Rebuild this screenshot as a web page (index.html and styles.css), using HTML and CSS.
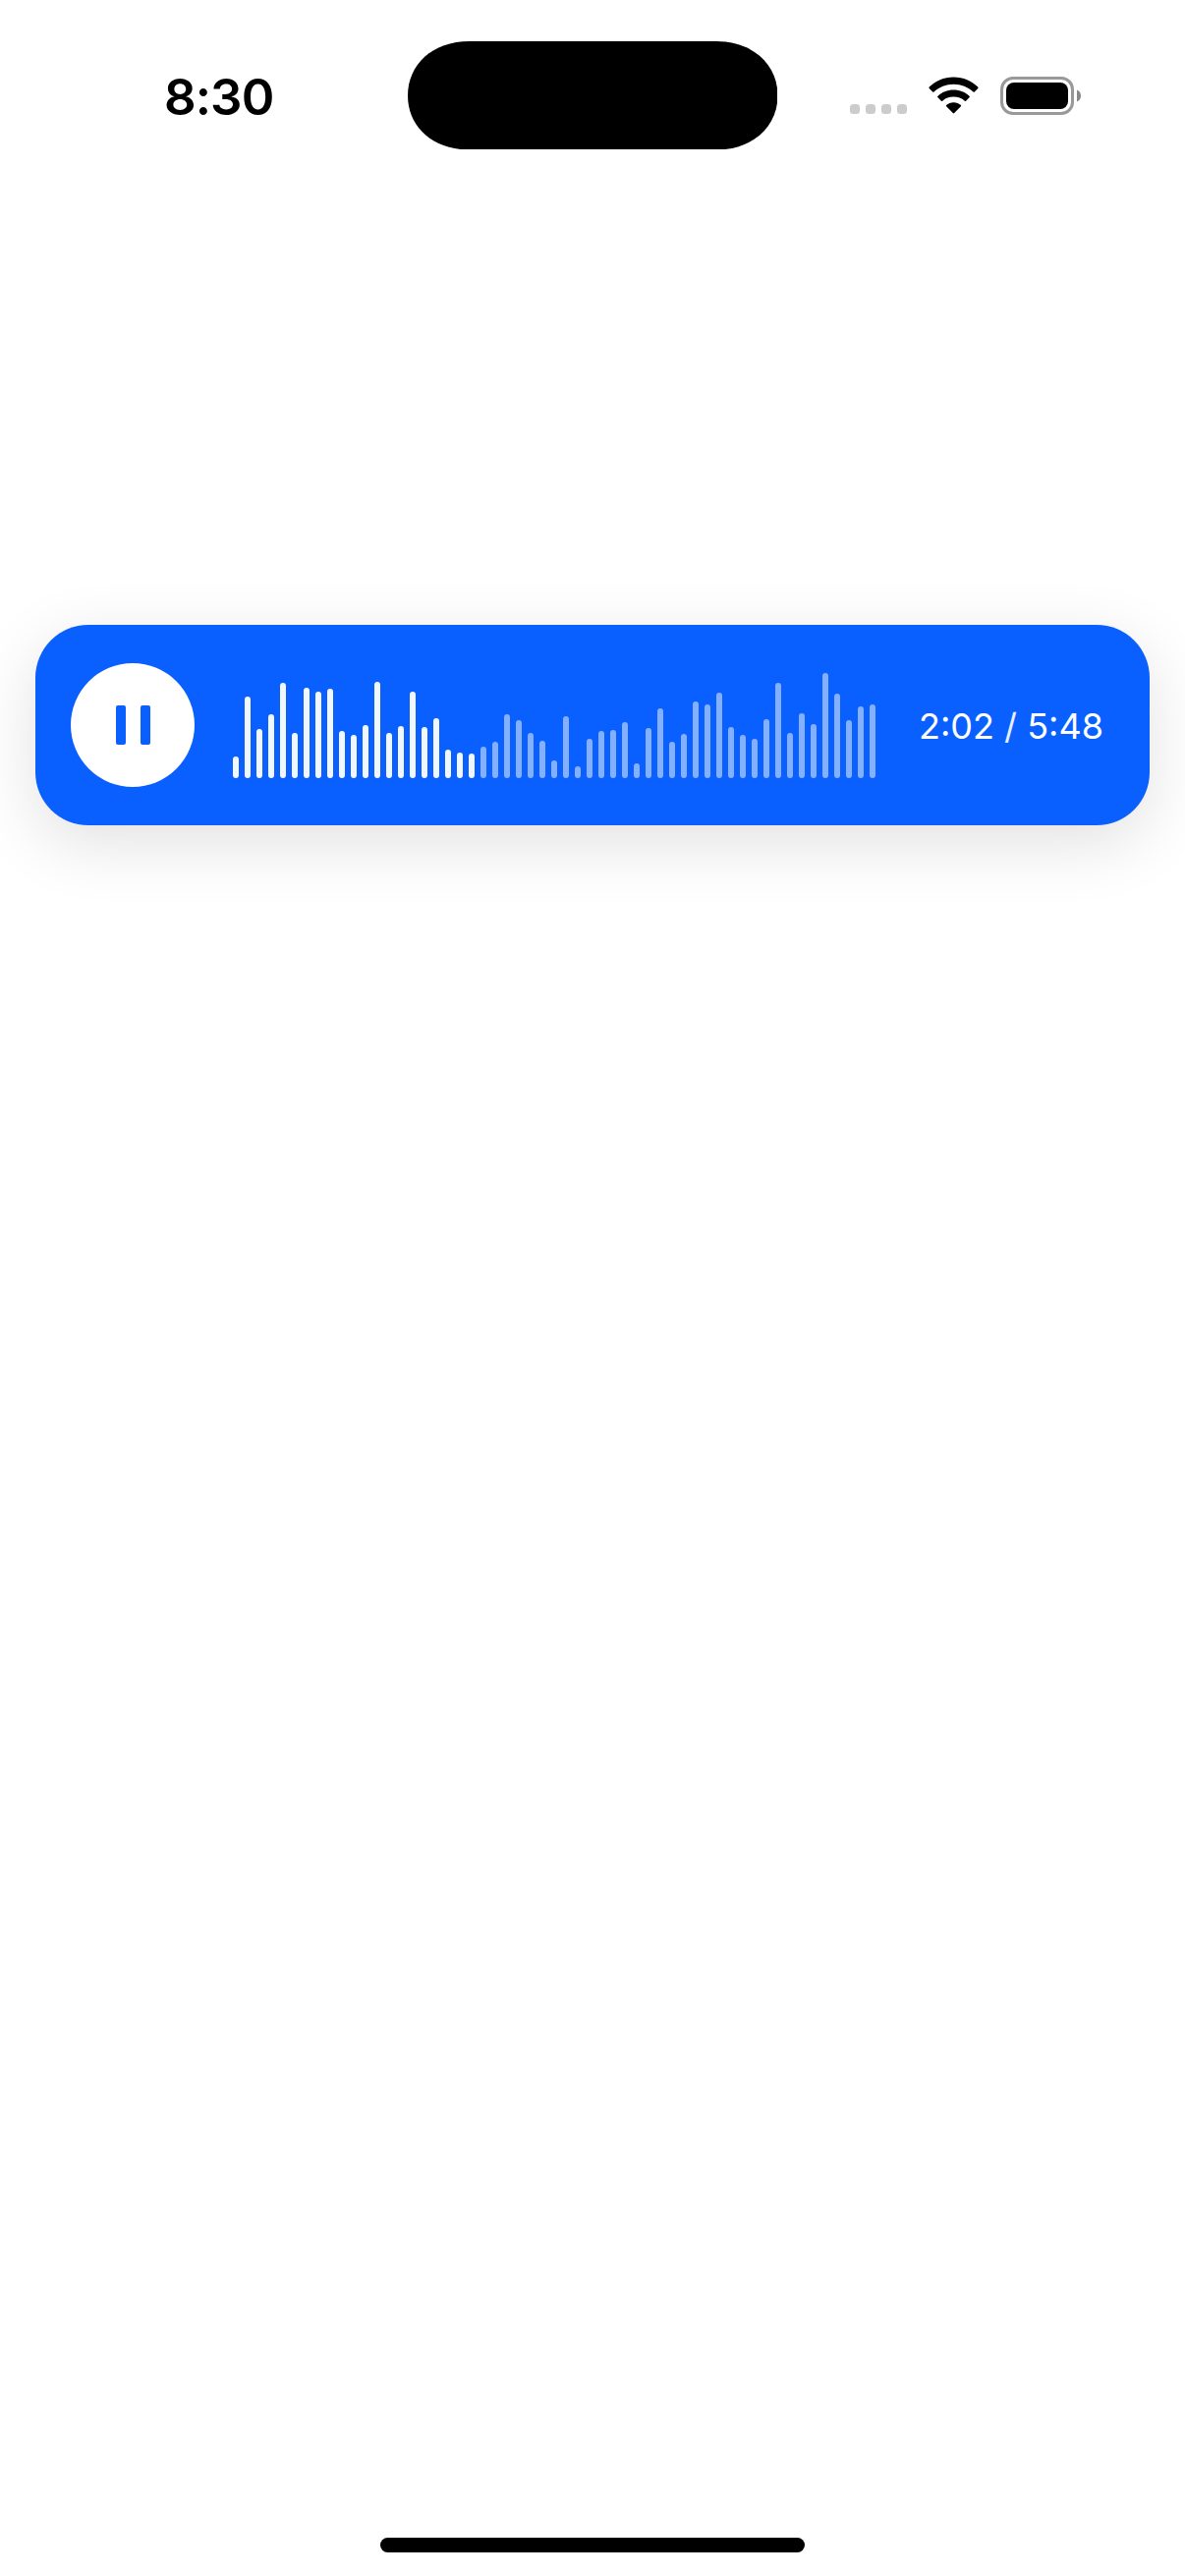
FILE: index.html
```
<!DOCTYPE html>
<html lang="en">
<head>
<meta charset="utf-8">
<title>Audio player</title>
<link rel="stylesheet" href="styles.css">
</head>
<body>
<div class="screen">
  <header class="status">
    <div class="clock">8:30</div>
    <svg class="island" viewBox="0 0 377 111" preserveAspectRatio="none"><path d="M63 0H314C352 0 377 24 377 55.5S352 111 314 111H63C25 111 0 87 0 55.5S25 0 63 0Z"/></svg>
    <div class="indicators">
      <div class="signal"><i></i><i></i><i></i><i></i></div>
      <svg class="wifi" viewBox="0 0 51 38"><path d="M25.5 0.5C35.300 0.500 44.200 4.400 50.300 10.600Q50.900 11.200 50.300 11.900L46.800 15.400Q46.200 16 45.500 15.400C40.200 10.700 33.200 7.800 25.500 7.800S10.800 10.700 5.500 15.400Q4.800 16 4.200 15.400L0.700 11.900Q0.100 11.200 0.700 10.600C6.800 4.400 15.700 0.500 25.500 0.500ZM25.500 13.500C31.800 13.500 37.500 15.900 41.700 19.900Q42.300 20.500 41.700 21.100L38.100 24.700Q37.500 25.300 36.800 24.700C33.800 22.100 29.900 20.600 25.500 20.600S17.200 22.100 14.200 24.700Q13.500 25.300 12.900 24.700L9.300 21.100Q8.700 20.500 9.300 19.900C13.500 15.900 19.200 13.500 25.500 13.500ZM25.500 26.200C28.400 26.200 31 27.300 32.900 29Q33.500 29.600 32.900 30.300L26.200 37.100Q25.500 37.800 24.800 37.100L18.100 30.300Q17.500 29.600 18.100 29C20 27.300 22.600 26.200 25.500 26.200Z"/></svg>
      <svg class="battery" viewBox="0 0 83 39"><rect x="1.500" y="1.500" width="72" height="36" rx="11.500" fill="none" stroke="#999" stroke-width="3"/><rect x="6" y="6" width="63" height="27" rx="8"/><path d="M78 13.500C80.500 14.500 82 16.800 82 19.500S80.500 24.500 78 25.500Z" fill="#888"/></svg>
    </div>
  </header>
  <main class="content">
    <section class="player">
      <button class="toggle" aria-label="Pause"><span></span><span></span></button>
      <div class="wave" id="wave"></div>
      <div class="time">2:02 <span>/</span> 5:48</div>
    </section>
  </main>
  <div class="home"></div>
</div>
<script src="wave.js"></script>
</body>
</html>
```
FILE: styles.css
```
* { box-sizing: border-box; }
body { margin: 0; background: #fff; font-family: Inter, "Liberation Sans", sans-serif; }
.screen { display: flex; flex-direction: column; width: 1206px; height: 2622px; }
.status { display: grid; grid-template-columns: 414.5px 377px 414.5px; align-items: center; height: 194px; color: #000; }
.clock { padding: 3px 0 0 167px; font-size: 51px; font-weight: 600; line-height: 60px; letter-spacing: -0.9px; }
.island { width: 376.5px; height: 110.5px; }
.indicators { display: flex; align-items: center; padding-left: 73.5px; }
.status svg { display: block; }
.signal { display: flex; gap: 6px; margin-top: 28px; }
.signal i { width: 10px; height: 10px; border-radius: 3.5px; background: #ccc; }
.wifi { width: 51px; height: 38px; margin-left: 22px; }
.battery { width: 83px; height: 39px; margin-left: 22px; }
.content { flex: 1; padding: 442px 36px 0; }
.player { display: flex; align-items: center; height: 204px; padding: 0 47px 0 36px; border-radius: 54px; background: #0a60ff; box-shadow: 0 18px 68px rgba(0, 0, 0, .12); }
.toggle { display: flex; justify-content: center; align-items: center; gap: 14.5px; width: 126px; height: 126px; padding: 0 0 0 1px; border: 0; border-radius: 50%; background: #fff; }
.toggle span { width: 10.5px; height: 40px; border-radius: 2px; background: #0a60ff; }
.wave { display: flex; align-items: flex-end; gap: 6px; height: 108px; margin-left: 39px; }
.bar { width: 6px; border-radius: 3px; background: rgba(255, 255, 255, .5); }
.bar.played { background: rgba(255, 255, 255, .95); }
.time { margin-left: auto; padding-top: 2px; font-size: 36px; font-weight: 400; color: #fff; white-space: nowrap; }
.time span { opacity: .9; }
.home { width: 432px; height: 15px; margin: 0 auto 24px; border-radius: 8px; background: #000; }
```
FILE: wave.js
```
const levels = [22,83,50,65,97,46,92,88,91,48,44,54,98,46,53,88,52,61,29,26,25,32,37,65,59,46,38,18,63,12,40,48,49,57,15,51,71,37,45,78,75,87,52,44,40,60,97,46,66,55,107,86,59,73,75];
const playedCount = 21;
const wave = document.getElementById('wave');
levels.forEach((level, i) => {
  const bar = document.createElement('div');
  bar.className = i < playedCount ? 'bar played' : 'bar';
  bar.style.height = level + 'px';
  wave.appendChild(bar);
});
```
